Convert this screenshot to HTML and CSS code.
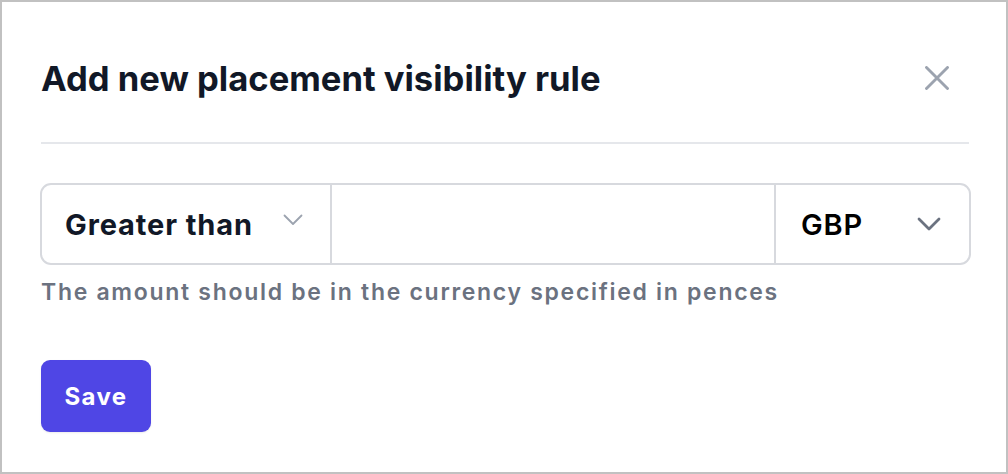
FILE: index.html
```html
<!DOCTYPE html>
<html lang="en">
<head>
<meta charset="utf-8">
<title>Add new placement visibility rule</title>
<link rel="stylesheet" href="styles.css">
</head>
<body>
<div class="modal">
  <div class="modal-header">
    <h1 class="modal-title">Add new placement visibility rule</h1>
    <button class="close-btn" aria-label="Close">
      <svg width="24" height="24" viewBox="0 0 24 24" fill="none" stroke="#9ca3af" stroke-width="2.9" stroke-linecap="round"><path d="M1.5 1.5 L22.5 22.5 M22.5 1.5 L1.5 22.5"/></svg>
    </button>
  </div>
  <div class="divider"></div>
  <div class="input-group">
    <div class="seg seg-op">
      <span class="op-label">Greater than</span>
      <svg class="chev-light" width="20" height="12" viewBox="0 0 20 12" fill="none" stroke="#9ca3af" stroke-width="1.8" stroke-linecap="round" stroke-linejoin="round"><path d="M1.5 1.5 L10 10 L18.5 1.5"/></svg>
    </div>
    <div class="seg seg-amount"></div>
    <div class="seg seg-cur">
      <span class="cur-label">GBP</span>
      <svg class="chev-dark" width="24" height="14" viewBox="0 0 24 14" fill="none" stroke="#6b7280" stroke-width="2.8" stroke-linecap="round" stroke-linejoin="round"><path d="M2 2 L12 12 L22 2"/></svg>
    </div>
  </div>
  <p class="help">The amount should be in the currency specified in pences</p>
  <button class="save-btn">Save</button>
</div>
</body>
</html>
```
FILE: styles.css
```css
html, body {
  margin: 0;
  padding: 0;
  background: #ffffff;
}
body {
  font-family: Inter, "Noto Sans", sans-serif;
}
.modal {
  box-sizing: border-box;
  width: 1008px;
  height: 474px;
  border: 2px solid #c1c1c1;
  padding: 0 35px 0 38px;
}
.modal-header {
  display: flex;
  align-items: center;
  justify-content: space-between;
  box-sizing: border-box;
  height: 140px;
  padding: 11px 0 0 1px;
}
.modal-title {
  margin: 0;
  font-size: 34.6px;
  font-weight: 700;
  color: #111827;
  letter-spacing: 0;
}
.close-btn {
  background: none;
  border: 0;
  padding: 0;
  margin-right: 22px;
  width: 24px;
  height: 24px;
  display: flex;
}
.divider {
  height: 2px;
  background: #e5e7eb;
  margin: 0 2px 0 1px;
}
.input-group {
  margin-top: 39px;
  display: flex;
  height: 82px;
  box-sizing: border-box;
  border: 2px solid #d7d9de;
  border-radius: 11px;
}
.seg {
  display: flex;
  align-items: center;
}
.seg-op {
  width: 290px;
  box-sizing: border-box;
  padding: 0 27px 0 23px;
  justify-content: space-between;
  border-right: 2px solid #d7d9de;
}
.op-label {
  font-size: 29px;
  font-weight: 700;
  color: #111827;
  letter-spacing: 0.9px;
}
.chev-light { margin-top: -8px; }
.seg-amount {
  flex: 1;
  border-right: 2px solid #d7d9de;
}
.seg-cur {
  width: 193px;
  box-sizing: border-box;
  padding: 0 28px 0 25px;
  justify-content: space-between;
}
.cur-label {
  font-size: 29px;
  font-weight: 600;
  color: #000000;
  letter-spacing: 0.8px;
}
.help {
  margin: 13px 0 0 1px;
  font-size: 23px;
  font-weight: 600;
  color: #6b7280;
  letter-spacing: 1.7px;
}
.save-btn {
  display: block;
  margin-top: 54px;
  margin-left: 1px;
  width: 110px;
  height: 72px;
  border: 0;
  border-radius: 9px;
  background: #4f46e5;
  color: #ffffff;
  font-family: Inter, "Noto Sans", sans-serif;
  font-size: 24px;
  font-weight: 700;
  letter-spacing: 1.4px;
  box-shadow: 0 1px 2px rgba(0,0,0,0.08);
}
```
